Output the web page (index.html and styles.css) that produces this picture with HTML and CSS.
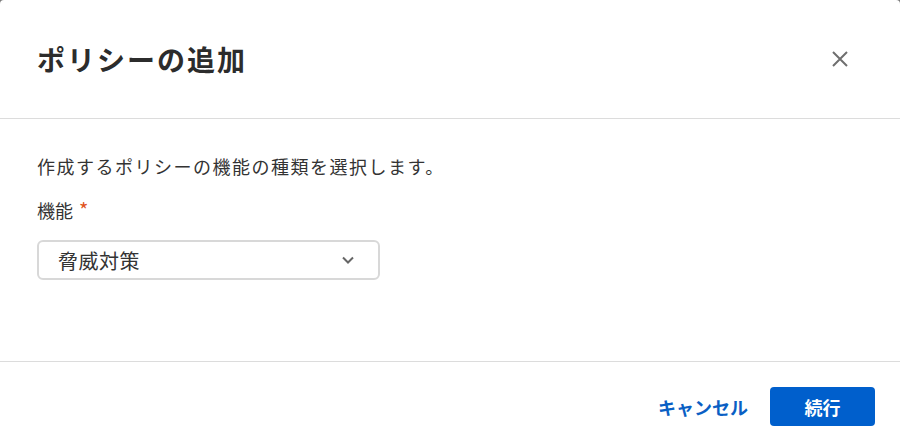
FILE: index.html
```html
<!DOCTYPE html>
<html lang="ja">
<head>
<meta charset="utf-8">
<link rel="stylesheet" href="styles.css">
</head>
<body>
<div class="modal">
  <div class="modal-header">
    <h1 class="modal-title">ポリシーの追加</h1>
    <button class="close-btn" aria-label="閉じる">
      <svg width="16" height="16" viewBox="0 0 16 16"><path d="M1 1L15 15M15 1L1 15" stroke="#6f6f6f" stroke-width="2" fill="none"/></svg>
    </button>
  </div>
  <div class="modal-body">
    <p class="desc">作成するポリシーの機能の種類を選択します。</p>
    <label class="field-label">機能 <span class="req">*</span></label>
    <div class="select">
      <span class="select-value">脅威対策</span>
      <svg class="chevron" width="12" height="8" viewBox="0 0 12 8"><path d="M1 1.5L6 6.5L11 1.5" stroke="#666" stroke-width="2" fill="none"/></svg>
    </div>
  </div>
  <div class="modal-footer">
    <button class="btn-link">キャンセル</button>
    <button class="btn-primary">続行</button>
  </div>
</div>
</body>
</html>
```
FILE: styles.css
```css
html, body {
  margin: 0;
  padding: 0;
}
body {
  background: #7a7a7a;
  font-family: "Noto Sans CJK JP", "Noto Sans", sans-serif;
  color: #2c2c2c;
}
.modal {
  width: 900px;
  height: 446px;
  background: #fff;
  border-radius: 4px 4px 0 0;
  display: flex;
  flex-direction: column;
  overflow: hidden;
}
.modal-header {
  height: 119px;
  border-bottom: 1px solid #dcdcdc;
  display: flex;
  align-items: center;
  justify-content: space-between;
  padding: 0 52px 0 37px;
  box-sizing: border-box;
  flex: none;
}
.modal-title {
  margin: 0;
  font-size: 28px;
  font-weight: 700;
  letter-spacing: 2px;
  color: #2c2c2c;
}
.close-btn {
  border: 0;
  background: none;
  padding: 0;
  width: 16px;
  height: 16px;
  display: flex;
}
.modal-body {
  flex: 1;
  padding: 34px 37px 0;
  border-bottom: 1px solid #dcdcdc;
}
.desc {
  margin: 0;
  font-size: 18px;
  line-height: 26px;
  letter-spacing: 1.5px;
  color: #333;
}
.field-label {
  display: block;
  margin-top: 18px;
  font-size: 18px;
  line-height: 26px;
  color: #333;
}
.req {
  color: #e0531b;
  font-size: 20px;
  margin-left: 2px;
}
.select {
  margin-top: 17px;
  width: 343px;
  height: 40px;
  box-sizing: border-box;
  border: 2px solid #d8d8d8;
  border-radius: 6px;
  display: flex;
  align-items: center;
  justify-content: space-between;
  padding: 0 24px 0 19px;
}
.select-value {
  font-size: 20px;
  letter-spacing: 0.5px;
  color: #333;
}
.modal-footer {
  height: 84px;
  flex: none;
  display: flex;
  align-items: flex-start;
  justify-content: flex-end;
  padding: 25px 25px 0 0;
  box-sizing: border-box;
  gap: 22px;
}
.btn-link {
  border: 0;
  background: none;
  font-family: inherit;
  font-size: 18px;
  font-weight: 700;
  color: #0a5fc4;
  height: 39px;
  padding: 0;
}
.btn-primary {
  border: 0;
  background: #005fcc;
  color: #fff;
  font-family: inherit;
  font-size: 18px;
  font-weight: 700;
  width: 105px;
  height: 39px;
  border-radius: 4px;
}
```
